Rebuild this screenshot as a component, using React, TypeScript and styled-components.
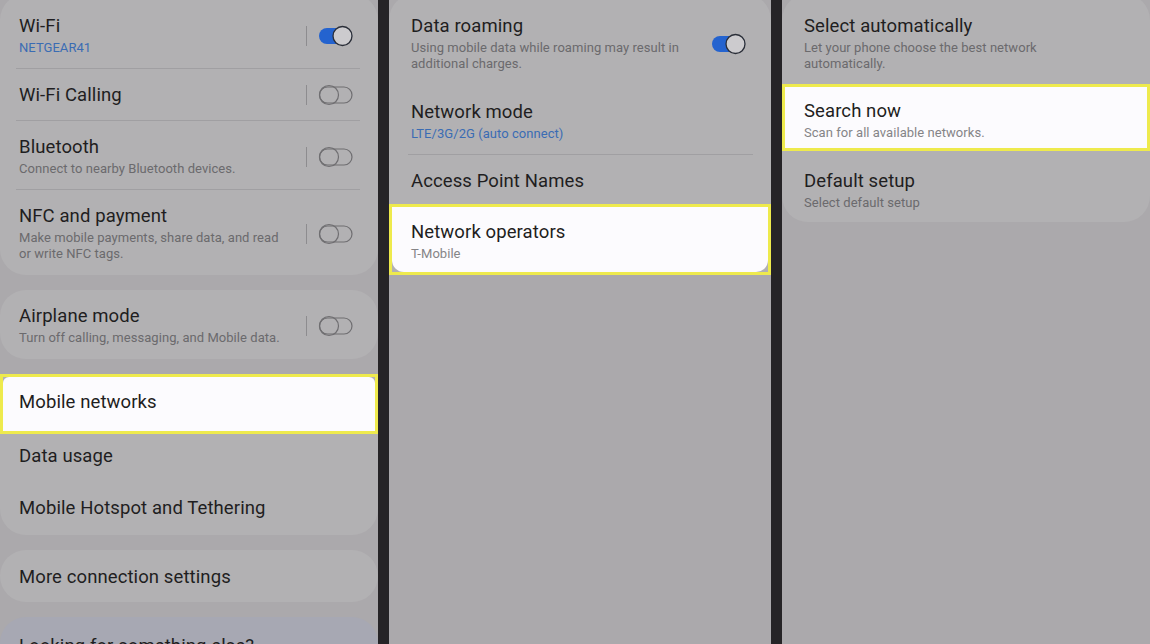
import React from 'react';
import styled, { createGlobalStyle } from 'styled-components';

const GlobalStyle = createGlobalStyle`
  html, body {
    margin: 0;
    padding: 0;
    background: #262427;
  }
  body {
    font-family: Roboto, "Noto Sans", "Liberation Sans", sans-serif;
    -webkit-font-smoothing: antialiased;
  }
`;

const Screen = styled.div`
  display: grid;
  grid-template-columns: 378px 382px 368px;
  column-gap: 11px;
  width: 1150px;
  height: 644px;
  overflow: hidden;
  background: #262427;
`;

const Panel = styled.section<{ $indent: number }>`
  --indent: ${p => p.$indent}px;
  display: flex;
  flex-direction: column;
  gap: 15px;
  background: #aba9ac;
  overflow: hidden;
`;

const Card = styled.div<{ $tone?: 'blue' }>`
  flex-shrink: 0;
  background: ${p => (p.$tone === 'blue' ? '#a7a8b3' : '#b2b1b3')};
  border-radius: 26px;

  &:first-child {
    margin-top: -6px;
  }
`;

const Row = styled.div<{ $pt?: number; $pb?: number }>`
  display: flex;
  align-items: center;
  padding: ${p => p.$pt ?? 15}px 24px ${p => p.$pb ?? 12}px var(--indent);
`;

const Highlight = styled.div`
  border: 3px solid #eeea4d;
  background: #b2b1b3;
`;

const HighlightRow = styled(Row)<{ $radius?: string }>`
  padding-left: calc(var(--indent) - 3px);
  padding-right: 21px;
  background: #fcfbfe;
  border-radius: ${p => p.$radius ?? '0'};
`;

const Divider = styled.div`
  height: 1px;
  margin: 0 18px 0 calc(var(--indent) - 3px);
  background: #a09fa2;
`;

const Texts = styled.div`
  flex: 1;
  min-width: 0;
`;

const Title = styled.div`
  font-size: 18.5px;
  line-height: 22px;
  letter-spacing: 0.1px;
  color: #1f1e21;
  white-space: nowrap;
`;

const Sub = styled.div<{ $accent?: boolean; $light?: boolean }>`
  margin-top: 3px;
  font-size: 13px;
  line-height: 16px;
  letter-spacing: 0.05px;
  color: ${p => (p.$accent ? '#3a6cb3' : p.$light ? '#858487' : '#6b6a6d')};
  white-space: nowrap;
`;

const ToggleArea = styled.div`
  display: flex;
  align-items: center;
  margin-left: 12px;
`;

const VLine = styled.div`
  width: 1px;
  height: 20px;
  margin-right: 11px;
  background: #8d8c8f;
`;

const Toggle = ({ on }: { on: boolean }) => (
  <svg width="36" height="22" viewBox="0 0 36 22">
    {on ? (
      <>
        <rect x="1" y="3" width="33" height="16" rx="8" fill="#2463cf" />
        <circle cx="24.5" cy="11" r="9.5" fill="#cccbce" stroke="#2a2e38" strokeWidth="1.3" />
      </>
    ) : (
      <>
        <rect x="1.5" y="3" width="32.5" height="16" rx="8" fill="none" stroke="#6f6e71" strokeWidth="1.2" />
        <circle cx="11" cy="11" r="9.5" fill="none" stroke="#6f6e71" strokeWidth="1.2" />
      </>
    )}
  </svg>
);

const Switch = ({ on, line = true }: { on: boolean; line?: boolean }) => (
  <ToggleArea>
    {line && <VLine />}
    <Toggle on={on} />
  </ToggleArea>
);

export default function App() {
  return (
    <>
      <GlobalStyle />
      <Screen>
        <Panel $indent={19}>
          <Card>
            <Row $pt={21}>
              <Texts>
                <Title>Wi-Fi</Title>
                <Sub $accent>NETGEAR41</Sub>
              </Texts>
              <Switch on />
            </Row>
            <Divider />
            <Row $pb={14}>
              <Texts>
                <Title>Wi-Fi Calling</Title>
              </Texts>
              <Switch on={false} />
            </Row>
            <Divider />
            <Row>
              <Texts>
                <Title>Bluetooth</Title>
                <Sub>Connect to nearby Bluetooth devices.</Sub>
              </Texts>
              <Switch on={false} />
            </Row>
            <Divider />
            <Row $pb={13}>
              <Texts>
                <Title>NFC and payment</Title>
                <Sub>
                  Make mobile payments, share data, and read
                  <br />
                  or write NFC tags.
                </Sub>
              </Texts>
              <Switch on={false} />
            </Row>
          </Card>

          <Card>
            <Row $pb={13}>
              <Texts>
                <Title>Airplane mode</Title>
                <Sub>Turn off calling, messaging, and Mobile data.</Sub>
              </Texts>
              <Switch on={false} />
            </Row>
          </Card>

          <Card>
            <Highlight>
              <HighlightRow $pt={14} $pb={18} $radius="6px 6px 0 0">
                <Title>Mobile networks</Title>
              </HighlightRow>
            </Highlight>
            <Row $pt={11} $pb={15}>
              <Title>Data usage</Title>
            </Row>
            <Row $pb={16}>
              <Title>Mobile Hotspot and Tethering</Title>
            </Row>
          </Card>

          <Card>
            <Row $pt={16} $pb={14}>
              <Title>More connection settings</Title>
            </Row>
          </Card>

          <Card $tone="blue">
            <Row $pt={18}>
              <Title>Looking for something else?</Title>
            </Row>
          </Card>
        </Panel>

        <Panel $indent={22}>
          <Card>
            <Row $pt={21} $pb={15}>
              <Texts>
                <Title>Data roaming</Title>
                <Sub>
                  Using mobile data while roaming may result in
                  <br />
                  additional charges.
                </Sub>
              </Texts>
              <Switch on line={false} />
            </Row>
            <Row $pt={14}>
              <Texts>
                <Title>Network mode</Title>
                <Sub $accent>LTE/3G/2G (auto connect)</Sub>
              </Texts>
            </Row>
            <Divider />
            <Row>
              <Title>Access Point Names</Title>
            </Row>
            <Highlight>
              <HighlightRow $pt={14} $pb={10} $radius="0 0 12px 12px">
                <Texts>
                  <Title>Network operators</Title>
                  <Sub $light>T-Mobile</Sub>
                </Texts>
              </HighlightRow>
            </Highlight>
          </Card>
        </Panel>

        <Panel $indent={22}>
          <Card>
            <Row $pt={21}>
              <Texts>
                <Title>Select automatically</Title>
                <Sub>
                  Let your phone choose the best network
                  <br />
                  automatically.
                </Sub>
              </Texts>
            </Row>
            <Highlight>
              <HighlightRow $pt={13} $pb={7}>
                <Texts>
                  <Title>Search now</Title>
                  <Sub $light>Scan for all available networks.</Sub>
                </Texts>
              </HighlightRow>
            </Highlight>
            <Row $pt={19} $pb={11}>
              <Texts>
                <Title>Default setup</Title>
                <Sub>Select default setup</Sub>
              </Texts>
            </Row>
          </Card>
        </Panel>
      </Screen>
    </>
  );
}
